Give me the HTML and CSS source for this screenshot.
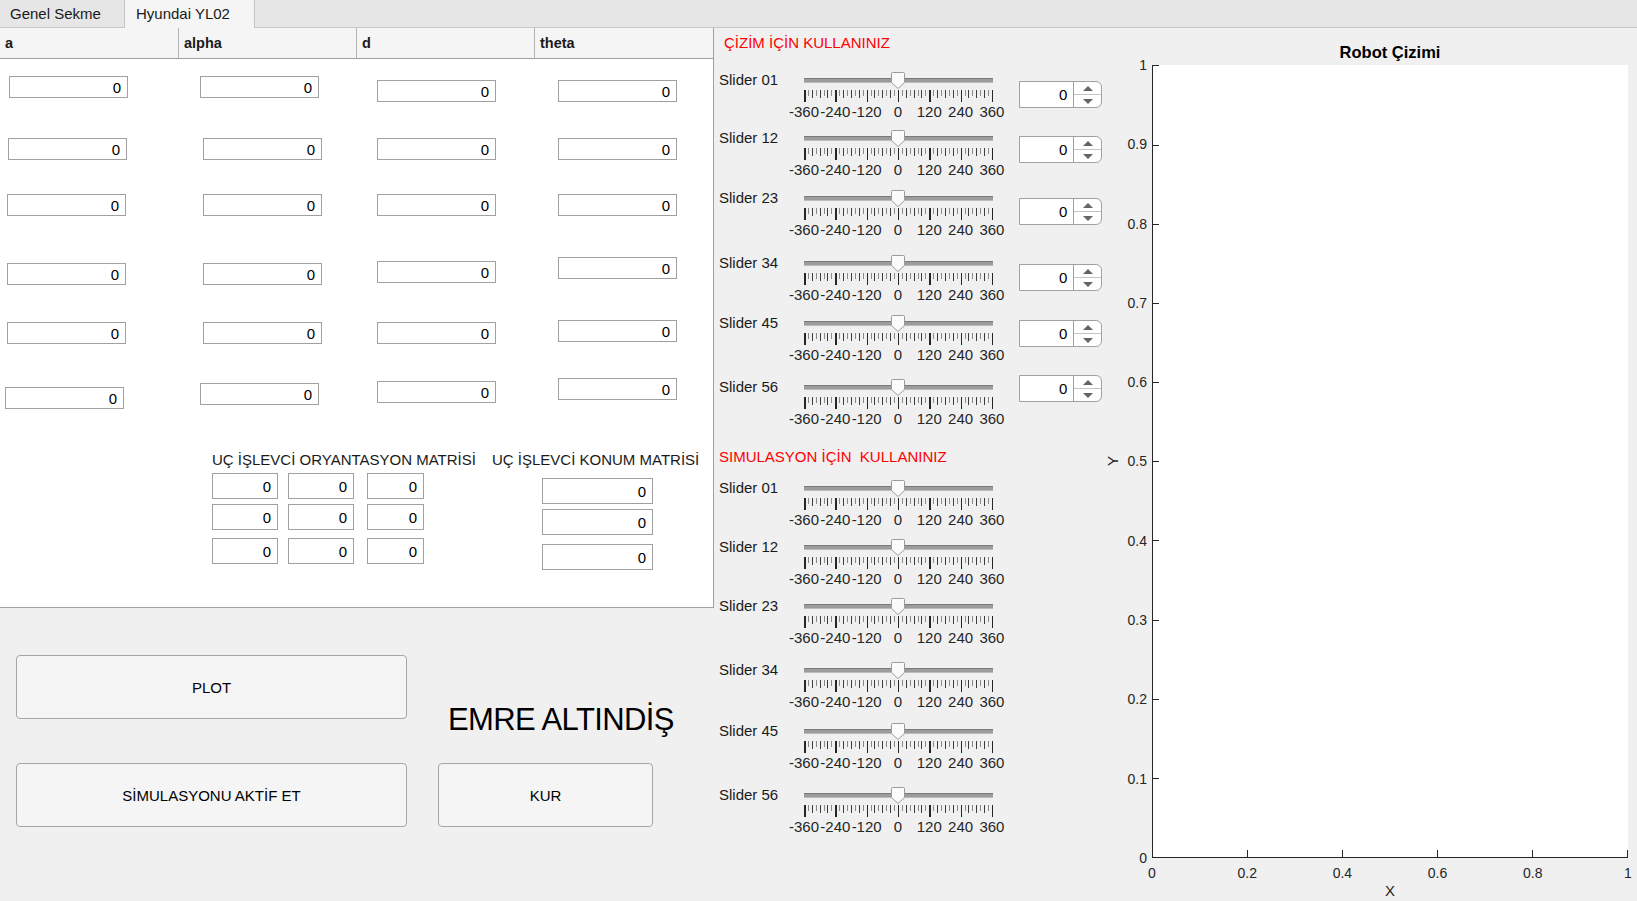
FILE: index.html
```html
<!DOCTYPE html>
<html lang="tr">
<head>
<meta charset="utf-8">
<title>Hyundai YL02</title>
<link rel="stylesheet" href="styles.css">
</head>
<body>
<div class="tabbar">
  <div class="tab first">Genel Sekme</div>
  <div class="tab active">Hyundai YL02</div>
</div>
<div class="main">
  <div class="leftcol">
    <div class="panel">
      <div class="thead"><div>a</div><div>alpha</div><div>d</div><div>theta</div></div>
      <div class="tbody">
        <div class="grid">
          <input class="fld x9" value="0"><input class="fld x22" value="0"><input class="fld dn4" value="0"><input class="fld dn4" value="0">
          <input class="fld x8" value="0"><input class="fld" value="0"><input class="fld" value="0"><input class="fld" value="0">
          <input class="fld" value="0"><input class="fld" value="0"><input class="fld" value="0"><input class="fld" value="0">
          <input class="fld" value="0"><input class="fld" value="0"><input class="fld up2" value="0"><input class="fld up6" value="0">
          <input class="fld" value="0"><input class="fld" value="0"><input class="fld" value="0"><input class="fld up2" value="0">
          <input class="fld x5" value="0"><input class="fld x22 up4" value="0"><input class="fld up6" value="0"><input class="fld up9" value="0">
        </div>
        <div class="matrices">
          <div class="orient">
            <div class="mlabel">UÇ İŞLEVCİ ORYANTASYON MATRİSİ</div>
            <div class="ogrid">
              <input class="fld" value="0"><input class="fld" value="0"><input class="fld" value="0">
              <input class="fld" value="0"><input class="fld" value="0"><input class="fld" value="0">
              <input class="fld" value="0"><input class="fld" value="0"><input class="fld" value="0">
            </div>
          </div>
          <div class="pos">
            <div class="mlabel">UÇ İŞLEVCİ KONUM MATRİSİ</div>
            <div class="pstack">
              <input class="fld" value="0"><input class="fld" value="0"><input class="fld" value="0">
            </div>
          </div>
        </div>
      </div>
    </div>
    <div class="actions">
      <div class="acol">
        <button class="btn">PLOT</button>
        <button class="btn sim">SİMULASYONU AKTİF ET</button>
      </div>
      <div class="acol">
        <div class="sig">EMRE ALTINDİŞ</div>
        <button class="btn kur">KUR</button>
      </div>
    </div>
  </div>

  <div class="sliders">
    <div class="stitle t1">ÇİZİM İÇİN KULLANINIZ</div>
    <div class="sgroup g1">
      <div class="srow"><div class="slabel">Slider 01</div><div class="slider"><div class="rail"><div class="track"></div><svg class="thumb" viewBox="0 0 14 17"><path d="M1.5 .5H12.5A1 1 0 0 1 13.5 1.5V10.5L7 16.5L.5 10.5V1.5A1 1 0 0 1 1.5 .5Z"/></svg></div><div class="ticks"></div><div class="tlabels"><span>-360</span><span>-240</span><span>-120</span><span>0</span><span>120</span><span>240</span><span>360</span></div></div><div class="spin"><div class="spin-val">0</div><div class="spin-btns"><span class="up"></span><span class="dn"></span></div></div></div>
      <div class="srow"><div class="slabel">Slider 12</div><div class="slider"><div class="rail"><div class="track"></div><svg class="thumb" viewBox="0 0 14 17"><path d="M1.5 .5H12.5A1 1 0 0 1 13.5 1.5V10.5L7 16.5L.5 10.5V1.5A1 1 0 0 1 1.5 .5Z"/></svg></div><div class="ticks"></div><div class="tlabels"><span>-360</span><span>-240</span><span>-120</span><span>0</span><span>120</span><span>240</span><span>360</span></div></div><div class="spin"><div class="spin-val">0</div><div class="spin-btns"><span class="up"></span><span class="dn"></span></div></div></div>
      <div class="srow"><div class="slabel">Slider 23</div><div class="slider"><div class="rail"><div class="track"></div><svg class="thumb" viewBox="0 0 14 17"><path d="M1.5 .5H12.5A1 1 0 0 1 13.5 1.5V10.5L7 16.5L.5 10.5V1.5A1 1 0 0 1 1.5 .5Z"/></svg></div><div class="ticks"></div><div class="tlabels"><span>-360</span><span>-240</span><span>-120</span><span>0</span><span>120</span><span>240</span><span>360</span></div></div><div class="spin"><div class="spin-val">0</div><div class="spin-btns"><span class="up"></span><span class="dn"></span></div></div></div>
      <div class="srow"><div class="slabel">Slider 34</div><div class="slider"><div class="rail"><div class="track"></div><svg class="thumb" viewBox="0 0 14 17"><path d="M1.5 .5H12.5A1 1 0 0 1 13.5 1.5V10.5L7 16.5L.5 10.5V1.5A1 1 0 0 1 1.5 .5Z"/></svg></div><div class="ticks"></div><div class="tlabels"><span>-360</span><span>-240</span><span>-120</span><span>0</span><span>120</span><span>240</span><span>360</span></div></div><div class="spin"><div class="spin-val">0</div><div class="spin-btns"><span class="up"></span><span class="dn"></span></div></div></div>
      <div class="srow"><div class="slabel">Slider 45</div><div class="slider"><div class="rail"><div class="track"></div><svg class="thumb" viewBox="0 0 14 17"><path d="M1.5 .5H12.5A1 1 0 0 1 13.5 1.5V10.5L7 16.5L.5 10.5V1.5A1 1 0 0 1 1.5 .5Z"/></svg></div><div class="ticks"></div><div class="tlabels"><span>-360</span><span>-240</span><span>-120</span><span>0</span><span>120</span><span>240</span><span>360</span></div></div><div class="spin"><div class="spin-val">0</div><div class="spin-btns"><span class="up"></span><span class="dn"></span></div></div></div>
      <div class="srow"><div class="slabel">Slider 56</div><div class="slider"><div class="rail"><div class="track"></div><svg class="thumb" viewBox="0 0 14 17"><path d="M1.5 .5H12.5A1 1 0 0 1 13.5 1.5V10.5L7 16.5L.5 10.5V1.5A1 1 0 0 1 1.5 .5Z"/></svg></div><div class="ticks"></div><div class="tlabels"><span>-360</span><span>-240</span><span>-120</span><span>0</span><span>120</span><span>240</span><span>360</span></div></div><div class="spin"><div class="spin-val">0</div><div class="spin-btns"><span class="up"></span><span class="dn"></span></div></div></div>
    </div>
    <div class="stitle t2">SIMULASYON İÇİN  KULLANINIZ</div>
    <div class="sgroup g2">
      <div class="srow"><div class="slabel">Slider 01</div><div class="slider"><div class="rail"><div class="track"></div><svg class="thumb" viewBox="0 0 14 17"><path d="M1.5 .5H12.5A1 1 0 0 1 13.5 1.5V10.5L7 16.5L.5 10.5V1.5A1 1 0 0 1 1.5 .5Z"/></svg></div><div class="ticks"></div><div class="tlabels"><span>-360</span><span>-240</span><span>-120</span><span>0</span><span>120</span><span>240</span><span>360</span></div></div></div>
      <div class="srow"><div class="slabel">Slider 12</div><div class="slider"><div class="rail"><div class="track"></div><svg class="thumb" viewBox="0 0 14 17"><path d="M1.5 .5H12.5A1 1 0 0 1 13.5 1.5V10.5L7 16.5L.5 10.5V1.5A1 1 0 0 1 1.5 .5Z"/></svg></div><div class="ticks"></div><div class="tlabels"><span>-360</span><span>-240</span><span>-120</span><span>0</span><span>120</span><span>240</span><span>360</span></div></div></div>
      <div class="srow"><div class="slabel">Slider 23</div><div class="slider"><div class="rail"><div class="track"></div><svg class="thumb" viewBox="0 0 14 17"><path d="M1.5 .5H12.5A1 1 0 0 1 13.5 1.5V10.5L7 16.5L.5 10.5V1.5A1 1 0 0 1 1.5 .5Z"/></svg></div><div class="ticks"></div><div class="tlabels"><span>-360</span><span>-240</span><span>-120</span><span>0</span><span>120</span><span>240</span><span>360</span></div></div></div>
      <div class="srow"><div class="slabel">Slider 34</div><div class="slider"><div class="rail"><div class="track"></div><svg class="thumb" viewBox="0 0 14 17"><path d="M1.5 .5H12.5A1 1 0 0 1 13.5 1.5V10.5L7 16.5L.5 10.5V1.5A1 1 0 0 1 1.5 .5Z"/></svg></div><div class="ticks"></div><div class="tlabels"><span>-360</span><span>-240</span><span>-120</span><span>0</span><span>120</span><span>240</span><span>360</span></div></div></div>
      <div class="srow"><div class="slabel">Slider 45</div><div class="slider"><div class="rail"><div class="track"></div><svg class="thumb" viewBox="0 0 14 17"><path d="M1.5 .5H12.5A1 1 0 0 1 13.5 1.5V10.5L7 16.5L.5 10.5V1.5A1 1 0 0 1 1.5 .5Z"/></svg></div><div class="ticks"></div><div class="tlabels"><span>-360</span><span>-240</span><span>-120</span><span>0</span><span>120</span><span>240</span><span>360</span></div></div></div>
      <div class="srow"><div class="slabel">Slider 56</div><div class="slider"><div class="rail"><div class="track"></div><svg class="thumb" viewBox="0 0 14 17"><path d="M1.5 .5H12.5A1 1 0 0 1 13.5 1.5V10.5L7 16.5L.5 10.5V1.5A1 1 0 0 1 1.5 .5Z"/></svg></div><div class="ticks"></div><div class="tlabels"><span>-360</span><span>-240</span><span>-120</span><span>0</span><span>120</span><span>240</span><span>360</span></div></div></div>
    </div>
  </div>

  <div class="plot">
    <div class="ptitle">Robot Çizimi</div>
    <div class="ylabel"><span>Y</span></div>
    <div class="yticks"><span>0</span><span>0.1</span><span>0.2</span><span>0.3</span><span>0.4</span><span>0.5</span><span>0.6</span><span>0.7</span><span>0.8</span><span>0.9</span><span>1</span></div>
    <div class="axes">
      <svg width="476" height="793" viewBox="0 0 476 793">
        <rect x="0" y="0" width="476" height="793" fill="#fff"/>
        <path d="M0.5 0V792.5H476" fill="none" stroke="#262626" stroke-width="1"/>
        <path d="M0 792.5H7M0 713.5H7M0 634.5H7M0 555.5H7M0 475.5H7M0 396.5H7M0 317.5H7M0 238.5H7M0 159.5H7M0 80.5H7M0 0.5H7M95.5 792V785M190.5 792V785M285.5 792V785M380.5 792V785M475.5 792V785" fill="none" stroke="#262626" stroke-width="1"/>
      </svg>
    </div>
    <div class="xticks"><span>0</span><span>0.2</span><span>0.4</span><span>0.6</span><span>0.8</span><span>1</span></div>
    <div class="xlabel">X</div>
  </div>
</div>
</body>
</html>
```
FILE: styles.css
```css
* { box-sizing: border-box; margin: 0; padding: 0; }
html, body { width: 1637px; height: 901px; overflow: hidden; }
body {
  background: #f0f0f0;
  font-family: "Liberation Sans", Arial, sans-serif;
  font-size: 15px;
  color: #000;
}

/* tabs */
.tabbar { display: flex; height: 28px; background: #e6e6e6; border-bottom: 1px solid #c6c6c6; }
.tab { height: 27px; line-height: 27px; border-right: 1px solid #c6c6c6; color: #1a1a1a; white-space: nowrap; }
.tab.first { width: 125px; padding-left: 10px; }
.tab.active { width: 130px; padding-left: 11px; height: 28px; background: #f5f5f5; }

.main { display: flex; height: 873px; }

/* left column */
.leftcol { width: 714px; flex: none; }
.panel { height: 580px; background: #fff; border-right: 1px solid #a0a0a0; border-bottom: 1px solid #a0a0a0; }
.thead {
  display: grid; grid-template-columns: 178px 178px 178px 1fr;
  height: 31px; background: #f5f5f5; border-bottom: 1px solid #a0a0a0;
}
.thead div { padding-left: 5px; line-height: 30px; font-weight: bold; font-size: 14.5px; color: #1a1a1a; }
.thead div + div { border-left: 1px solid #b4b4b4; }

.tbody { padding-top: 17px; }
.grid {
  display: grid; grid-template-columns: repeat(4, 178px);
  grid-template-rows: 62px 56px 69px 59px 65px 22px;
  align-items: start; justify-items: start;
}
.fld {
  display: block; width: 119px; height: 22px;
  border: 1px solid #a0a0a0; border-radius: 0; background: #fff;
  font: 15px "Liberation Sans", Arial, sans-serif; color: #000;
  text-align: right; padding: 0 6px; outline: none;
}
.grid .fld:nth-child(4n+1) { margin-left: 7px; }
.grid .fld:nth-child(4n+2) { margin-left: 25px; }
.grid .fld:nth-child(4n+3) { margin-left: 21px; }
.grid .fld:nth-child(4n) { margin-left: 24px; }
.grid .fld.x5 { margin-left: 5px; }
.grid .fld.x8 { margin-left: 8px; }
.grid .fld.x9 { margin-left: 9px; }
.grid .fld.x22 { margin-left: 22px; }
.grid .fld.dn4 { margin-top: 4px; }
.grid .fld.up2 { margin-top: -2px; }
.grid .fld.up4 { margin-top: -4px; }
.grid .fld.up6 { margin-top: -6px; }
.grid .fld.up9 { margin-top: -9px; }

.matrices { display: flex; margin-top: 42px; padding-left: 212px; }
.orient { width: 280px; flex: none; }
.mlabel { line-height: 18px; white-space: nowrap; color: #1a1a1a; }
.ogrid {
  display: grid; margin-top: 4px;
  grid-template-columns: 66px 66px 60px; grid-template-rows: 26px 26px 29px;
  column-gap: 10px; row-gap: 5px; justify-items: end; align-items: end;
}
.ogrid .fld { width: 66px; height: 26px; }
.ogrid .fld:nth-child(3n) { width: 57px; }
.pstack { display: flex; flex-direction: column; margin: 9px 0 0 50px; }
.pstack .fld { width: 111px; height: 26px; }
.pstack .fld + .fld { margin-top: 5px; }
.pstack .fld:last-child { margin-top: 9px; }

/* buttons */
.actions { display: flex; padding: 47px 0 0 16px; gap: 31px; }
.acol { display: flex; flex-direction: column; align-items: flex-start; }
.btn {
  width: 391px; height: 64px;
  font: 15px "Liberation Sans", Arial, sans-serif; color: #000;
  background: #f5f5f5; border: 1px solid #a6a6a6; border-radius: 4px;
}
.btn.sim { margin-top: 44px; }
.btn.kur { width: 215px; margin-top: 25px; }
.sig { font-size: 31px; line-height: 36px; letter-spacing: -0.6px; margin: 47px 0 0 10px; white-space: nowrap; color: #000; }

/* sliders */
.sliders { width: 391px; flex: none; padding: 6px 0 0 5px; }
.stitle { color: #ff0000; line-height: 18px; white-space: pre; }
.t1 { margin-left: 5px; }
.g1 { margin-top: 19px; }
.t2 { margin-top: 20px; }
.g2 { margin-top: 13px; }
.srow { display: flex; align-items: flex-start; }
.g1 .srow:nth-child(1) { height: 58px; }
.g1 .srow:nth-child(2) { height: 60px; }
.g1 .srow:nth-child(3) { height: 65px; }
.g1 .srow:nth-child(4) { height: 60px; }
.g1 .srow:nth-child(5) { height: 64px; }
.g1 .srow:nth-child(6) { height: 50px; }
.g2 .srow:nth-child(1) { height: 59px; }
.g2 .srow:nth-child(2) { height: 59px; }
.g2 .srow:nth-child(3) { height: 64px; }
.g2 .srow:nth-child(4) { height: 61px; }
.g2 .srow:nth-child(5) { height: 64px; }
.g2 .srow:nth-child(6) { height: 50px; }
.slabel { width: 69.33px; flex: none; line-height: 18px; color: #1a1a1a; white-space: nowrap; }
.slider { width: 220px; flex: none; margin-top: 1px; }
.rail { position: relative; height: 18px; padding: 6px 15.67px 0; }
.track { height: 5px; background: linear-gradient(#7a7a7a 0 1px, #9c9c9c 1px 4px, #bcbcbc 4px); }
.thumb { position: absolute; left: 103px; top: 0; width: 14px; height: 17px; display: block; }
.thumb path { fill: #fbfbfb; stroke: #9a9a9a; stroke-width: 1; }
.ticks {
  margin-left: 15.67px; width: 190px; height: 12px;
  background:
    repeating-linear-gradient(90deg, #262626 0 1.5px, transparent 1.5px 31.333px) 0 0 / 100% 12px no-repeat,
    repeating-linear-gradient(90deg, #3c3c3c 0 1px, transparent 1px 7.8333px) 0 0 / 100% 8px no-repeat,
    repeating-linear-gradient(90deg, transparent 0 3.9167px, #8a8a8a 3.9167px 4.9167px, transparent 4.9167px 7.8333px) 0 0 / 100% 6px no-repeat;
}
.tlabels { display: flex; margin-top: 1px; line-height: 18px; color: #262626; }
.tlabels span { flex: 0 0 31.333px; text-align: center; white-space: nowrap; display: flex; justify-content: center; }

.spin {
  display: flex; flex: none; width: 83px; height: 27px; margin-left: 11px; margin-top: 10px;
  border: 1px solid #a0a0a0; border-radius: 0 6px 6px 0; background: #fff;
}
.g1 .srow:nth-child(2) .spin { margin-top: 7px; }
.g1 .srow:nth-child(3) .spin { margin-top: 9px; }
.g1 .srow:nth-child(5) .spin { margin-top: 6px; }
.g1 .srow:nth-child(6) .spin { margin-top: -3px; }
.spin-val { flex: 1; text-align: right; padding-right: 6px; line-height: 25px; }
.spin-btns { width: 28px; flex: none; border-left: 1px solid #a0a0a0; display: flex; flex-direction: column; }
.spin-btns span { flex: 1; display: flex; align-items: center; justify-content: center; }
.spin-btns span + span { border-top: 1px solid #c4c4c4; }
.spin-btns span::after { content: ""; border-left: 5px solid transparent; border-right: 5px solid transparent; }
.spin-btns .up::after { border-bottom: 5px solid #656565; }
.spin-btns .dn::after { border-top: 5px solid #656565; }

/* plot */
.plot { flex: 1; display: grid; grid-template-columns: 15px 32px 476px; align-content: start; padding-top: 14px; }
.ptitle { grid-column: 3; grid-row: 1; text-align: center; font-weight: bold; font-size: 16.5px; line-height: 20px; margin-bottom: 3px; color: #000; }
.ylabel { grid-column: 1; grid-row: 2; display: flex; align-items: center; justify-content: center; }
.ylabel span { writing-mode: vertical-rl; transform: rotate(180deg); color: #262626; line-height: 15px; }
.yticks {
  grid-column: 2; grid-row: 2; display: flex; flex-direction: column-reverse;
  justify-content: space-between; padding-right: 5px; font-size: 14px; color: #262626;
}
.yticks span { height: 0; display: flex; align-items: center; justify-content: flex-end; line-height: 16px; }
.axes { grid-column: 3; grid-row: 2; width: 476px; height: 793px; }
.axes svg { display: block; }
.xticks {
  grid-column: 3; grid-row: 3; display: flex; justify-content: space-between;
  margin-top: 6px; line-height: 18px; font-size: 14px; color: #262626;
}
.xticks span { width: 0; display: flex; justify-content: center; white-space: nowrap; }
.xlabel { grid-column: 3; grid-row: 4; text-align: center; line-height: 18px; color: #262626; }
```
